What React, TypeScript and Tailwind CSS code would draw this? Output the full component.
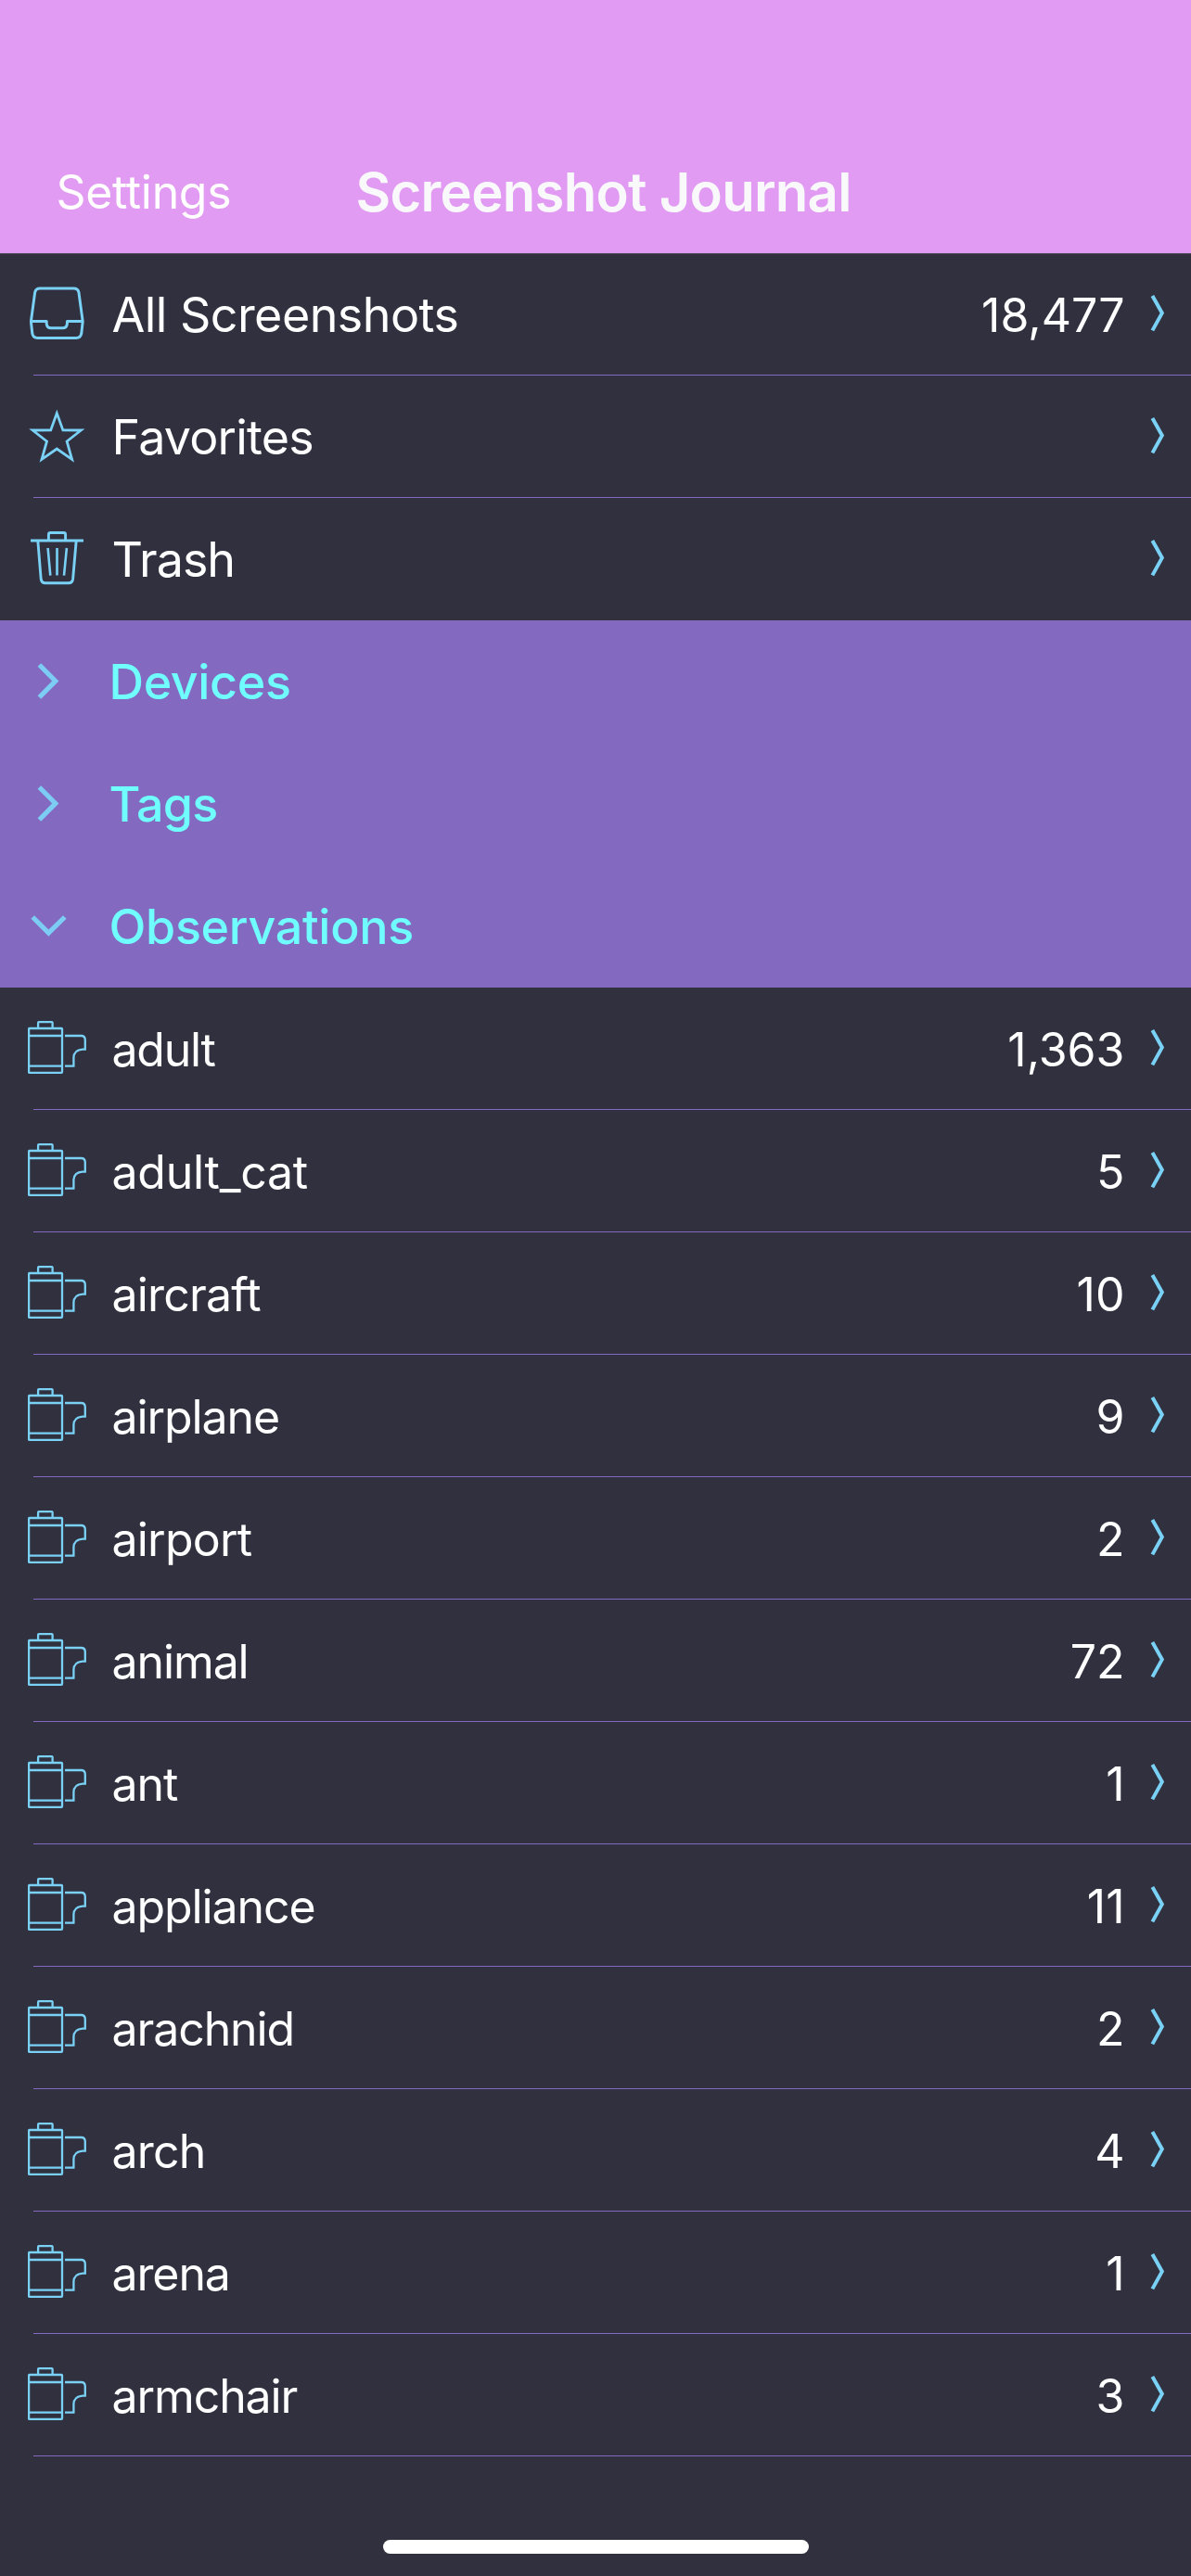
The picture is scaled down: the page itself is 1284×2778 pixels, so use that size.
import type { ReactNode } from "react";

type Observation = { name: string; count: string; tracking?: string };

const observations: Observation[] = [
  { name: "adult", count: "1,363", tracking: "tracking-[-1.25px]" },
  { name: "adult_cat", count: "5", tracking: "tracking-[-0.26px]" },
  { name: "aircraft", count: "10", tracking: "tracking-[-0.8px]" },
  { name: "airplane", count: "9" },
  { name: "airport", count: "2", tracking: "tracking-[-0.8px]" },
  { name: "animal", count: "72" },
  { name: "ant", count: "1" },
  { name: "appliance", count: "11" },
  { name: "arachnid", count: "2" },
  { name: "arch", count: "4", tracking: "tracking-[-0.8px]" },
  { name: "arena", count: "1" },
  { name: "armchair", count: "3" },
];

function InboxIcon() {
  return (
    <svg width="63" height="60" viewBox="0 0 63 60" fill="none" stroke="#7ad1f6" strokeWidth="3" strokeLinejoin="round">
      <path d="M3.4 37.6L7.6 6.6Q8.4 1.9 13.2 1.9H49.4Q54.2 1.9 55 6.6L59.2 37.6L57.8 50.6Q57 55.6 52 55.6H10.6Q5.6 55.6 4.8 50.6Z" />
      <path d="M3.4 37.6H20.2V40.2Q20.8 44.8 25 44.8H37.6Q41.8 44.8 42.4 40.2V37.6H59.2" />
    </svg>
  );
}

function StarIcon() {
  return (
    <svg width="63" height="60" viewBox="0 0 63 60" fill="none" stroke="#7ad1f6" strokeWidth="2.8" strokeMiterlimit="10">
      <path d="M31.3 4.6L37.9 22.9L57.4 23L42.1 35L47.6 54.3L31.3 43L15 54.3L20.5 35L5.2 23L24.7 22.9Z" />
    </svg>
  );
}

function TrashIcon() {
  return (
    <svg width="63" height="60" viewBox="0 0 63 60" fill="none" stroke="#7ad1f6" strokeWidth="2.9">
      <path d="M3 10H60" />
      <path d="M22.4 10V3.5Q22.4 1.5 24.4 1.5H38.6Q40.6 1.5 40.6 3.5V10" />
      <path d="M10.8 10L14.2 51.5Q14.8 55.8 19 55.8H43.8Q48 55.8 48.6 51.5L52.2 10" />
      <path d="M21.6 18L24.3 47.6M31.5 18V47.6M41.9 18L39 47.6" strokeWidth="2.6" />
    </svg>
  );
}

function FilmIcon() {
  return (
    <svg width="63" height="60" viewBox="0 0 63 60" fill="none" stroke="#7ad1f6" strokeWidth="2.3">
      <rect x="1.1" y="8" width="35.9" height="47.9" rx="0.8" />
      <path d="M11.1 8V2Q11.1 1.2 11.9 1.2H25.8Q26.6 1.2 26.6 2V8" />
      <path d="M1 16H37M1 48.7H37" />
      <path d="M40 16H57.5Q61.8 16 61.8 20.5V30.6H59Q49.4 31.2 49.4 40V48.7H40" />
    </svg>
  );
}

function RowChevron() {
  return (
    <svg width="18" height="44" viewBox="0 0 18 44" fill="none" stroke="#7ad1f6" strokeWidth="4">
      <path d="M2.4 3L12.8 21.6L2.4 40.4" />
    </svg>
  );
}

function SectionChevron({ open }: { open?: boolean }) {
  return (
    <svg width="48" height="48" viewBox="0 0 48 48" fill="none" stroke="#7cccf3" strokeWidth="5.2">
      {open ? <path d="M5.2 14L22.4 31.2L39.8 14" /> : <path d="M12.4 6L29.8 23.4L12.4 41" />}
    </svg>
  );
}

function Row({ icon, children, count }: { icon: ReactNode; children: ReactNode; count?: string }) {
  return (
    <li className="ml-9 flex h-[132px] items-start border-b border-[#8369c0] text-white">
      <span className="-ml-1.5 mt-9 w-[90.5px] shrink-0">{icon}</span>
      {children}
      <span className="ml-auto text-[50px] leading-[134px]">{count}</span>
      <span className="mr-[26px] ml-[27.5px] mt-[43px]">
        <RowChevron />
      </span>
    </li>
  );
}

function Section({ title, open, tracking }: { title: string; open?: boolean; tracking: string }) {
  return (
    <div className="flex h-[132px] items-start bg-[#8369c0] pl-[30px]">
      <span className="mt-[42px] w-[87.5px] shrink-0">
        <SectionChevron open={open} />
      </span>
      <h2 className={`text-[52px] leading-[134px] font-medium text-[#70fdfe] ${tracking}`}>{title}</h2>
    </div>
  );
}

export default function App() {
  return (
    <div className="flex h-[2778px] w-[1284px] flex-col overflow-hidden bg-[#31303e] font-['Inter',sans-serif]">
      <header className="flex h-[273px] shrink-0 items-end bg-[#e29bf2] pl-[60.5px]">
        <a className="w-[323px] text-[50px] leading-[132px] tracking-[-0.34px] text-white">Settings</a>
        <h1 className="text-[58px] leading-[132px] font-semibold tracking-[-0.72px] whitespace-nowrap text-[#f9f8fb]">Screenshot Journal</h1>
      </header>

      <ul className="h-[396px] shrink-0 overflow-hidden shadow-[inset_0_1px_0_#504d5b] [&>li:last-child]:border-transparent">
        <Row icon={<InboxIcon />} count="18,477">
          <span className="text-[52px] leading-[134px] tracking-[-0.55px]">All Screenshots</span>
        </Row>
        <Row icon={<StarIcon />}>
          <span className="text-[52px] leading-[134px] tracking-[-0.8px]">Favorites</span>
        </Row>
        <Row icon={<TrashIcon />}>
          <span className="text-[52px] leading-[134px] tracking-[-1px]">Trash</span>
        </Row>
      </ul>

      <Section title="Devices" tracking="tracking-[-0.37px]" />
      <Section title="Tags" tracking="tracking-[-0.75px]" />
      <Section title="Observations" tracking="tracking-[-0.3px]" open />

      <ul className="shrink-0">
        {observations.map((o) => (
          <Row key={o.name} icon={<FilmIcon />} count={o.count}>
            <span className={`text-[50px] leading-[134px] ${o.tracking ?? "tracking-[-1.1px]"}`}>{o.name}</span>
          </Row>
        ))}
      </ul>

      <div className="mx-auto mt-[90px] h-[15px] w-[459px] shrink-0 rounded-full bg-white" />
    </div>
  );
}
